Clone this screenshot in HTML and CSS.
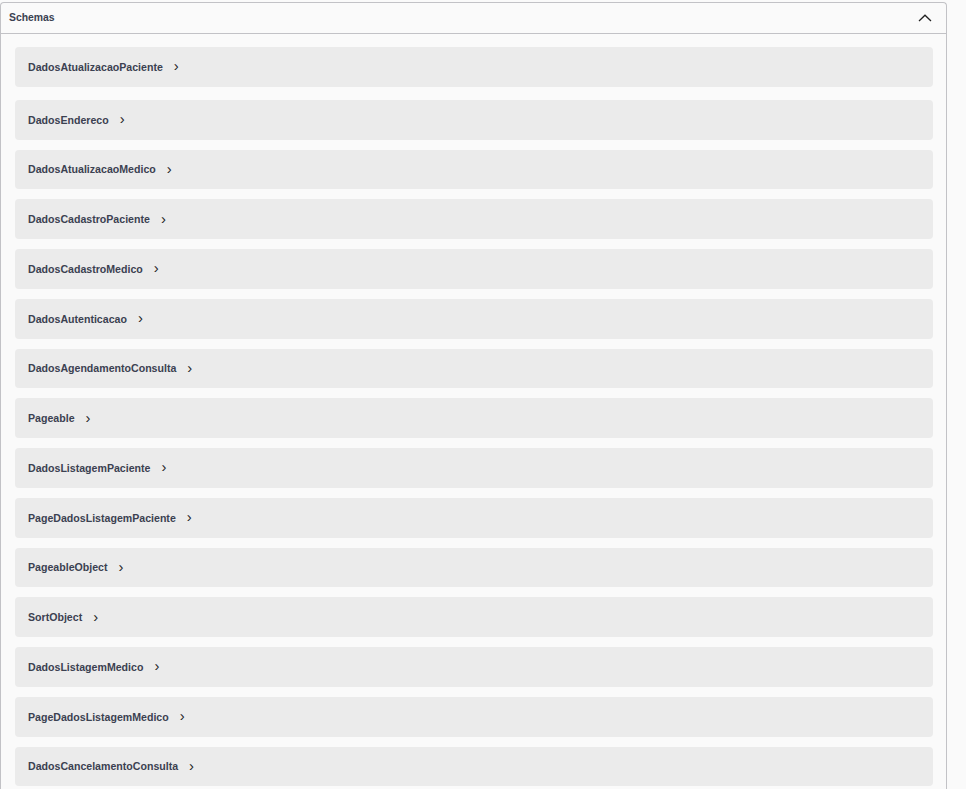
FILE: index.html
```html
<!DOCTYPE html>
<html lang="en">
<head>
  <meta charset="UTF-8" />
  <meta name="viewport" content="width=device-width, initial-scale=1.0" />
  <title>Schemas</title>
  <link rel="stylesheet" href="styles.css">
</head>
<body>
  <section class="models">
    <div class="models-header">
      <span>Schemas</span>
      <svg class="arrow-up" width="14" height="8" viewBox="0 0 14 8">
        <path d="M1 7 L7 1.2 L13 7" fill="none" stroke="#222" stroke-width="1.3" />
      </svg>
    </div>
    <div class="models-list">
      <div class="model-box"><span class="model-title">DadosAtualizacaoPaciente</span><span class="caret">&#8250;</span></div>
      <div class="model-box"><span class="model-title">DadosEndereco</span><span class="caret">&#8250;</span></div>
      <div class="model-box"><span class="model-title">DadosAtualizacaoMedico</span><span class="caret">&#8250;</span></div>
      <div class="model-box"><span class="model-title">DadosCadastroPaciente</span><span class="caret">&#8250;</span></div>
      <div class="model-box"><span class="model-title">DadosCadastroMedico</span><span class="caret">&#8250;</span></div>
      <div class="model-box"><span class="model-title">DadosAutenticacao</span><span class="caret">&#8250;</span></div>
      <div class="model-box"><span class="model-title">DadosAgendamentoConsulta</span><span class="caret">&#8250;</span></div>
      <div class="model-box"><span class="model-title">Pageable</span><span class="caret">&#8250;</span></div>
      <div class="model-box"><span class="model-title">DadosListagemPaciente</span><span class="caret">&#8250;</span></div>
      <div class="model-box"><span class="model-title">PageDadosListagemPaciente</span><span class="caret">&#8250;</span></div>
      <div class="model-box"><span class="model-title">PageableObject</span><span class="caret">&#8250;</span></div>
      <div class="model-box"><span class="model-title">SortObject</span><span class="caret">&#8250;</span></div>
      <div class="model-box"><span class="model-title">DadosListagemMedico</span><span class="caret">&#8250;</span></div>
      <div class="model-box"><span class="model-title">PageDadosListagemMedico</span><span class="caret">&#8250;</span></div>
      <div class="model-box"><span class="model-title">DadosCancelamentoConsulta</span><span class="caret">&#8250;</span></div>
    </div>
  </section>
</body>
</html>
```

FILE: styles.css
```css
body {
  margin: 0;
  padding: 2px 19px 0 0;
  background-color: #fafafa;
  font-family: "Liberation Sans", Arial, sans-serif;
  color: #3b4151;
}

.models {
  border: 1px solid #c2c2c6;
  border-bottom: none;
  border-radius: 4px 4px 0 0;
  background-color: #fafafa;
}

.models-header {
  display: flex;
  align-items: center;
  justify-content: space-between;
  height: 28px;
  padding: 0 14px 2px 8px;
  border-bottom: 1px solid #c2c2c6;
  font-size: 10.4px;
  font-weight: bold;
}

.arrow-up {
  margin-top: 2px;
}

.models-list {
  display: flex;
  flex-direction: column;
  gap: 10px;
  padding: 13px 13px 4px 14px;
}

.model-box {
  display: flex;
  align-items: center;
  height: 39.75px;
  padding: 0 13px;
  background-color: #ebebeb;
  border-radius: 4px;
  font-size: 10.6px;
  font-weight: bold;
}

.model-box:first-child {
  margin-bottom: 3px;
}

.caret {
  margin-left: 11px;
  font-size: 15px;
  font-weight: normal;
  line-height: 1;
  color: #1f1f1f;
  position: relative;
  top: -1px;
}
```
